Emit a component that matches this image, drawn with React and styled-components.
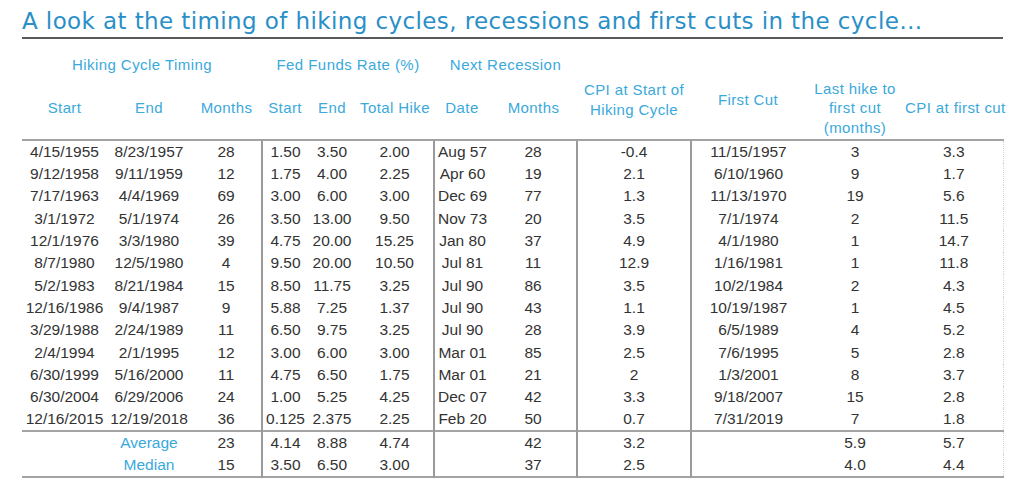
import React from "react";
import styled, { createGlobalStyle } from "styled-components";

const Global = createGlobalStyle`
  html, body { margin: 0; padding: 0; background: #fff; }
  body { font-family: "Liberation Sans", Arial, sans-serif; }
`;

const Page = styled.div`
  width: 1024px;
  height: 495px;
  padding: 0 21px 0 22px;
  box-sizing: border-box;
  overflow: hidden;
`;

const Title = styled.h1`
  margin: 0;
  padding-top: 6px;
  height: 31px;
  font-family: "DejaVu Sans", "Liberation Sans", sans-serif;
  font-size: 23px;
  letter-spacing: 0.4px;
  font-weight: 400;
  line-height: 30px;
  color: #2a8fc7;
  border-bottom: 2px solid #5a5a5a;
  white-space: nowrap;
`;

const Table = styled.table`
  width: 981px;
  border-collapse: collapse;
  table-layout: fixed;
  font-size: 15.5px;
  color: #333;
`;

const GroupRow = styled.tr`
  height: 38px;
`;

const HeadRow = styled.tr`
  height: 63px;
`;

const GroupCell = styled.th`
  padding: 0 0 4px;
  vertical-align: bottom;
  font-weight: 400;
  font-size: 15px;
  letter-spacing: 0.45px;
  color: #3aa9dc;
  text-align: center;
`;

const HeadCell = styled.th`
  padding: 0 0 ${(p) => (p.$lift ? "17px" : "0")};
  vertical-align: middle;
  font-weight: 400;
  font-size: 15px;
  letter-spacing: 0.4px;
  line-height: 19.5px;
  color: #3aa9dc;
  text-align: center;
  white-space: nowrap;
  border-bottom: 2px solid #a3a3a3;
`;

const Row = styled.tr`
  height: 22.3px;
  border-top: ${(p) => (p.$first ? "2px solid #a3a3a3" : "none")};
  border-bottom: ${(p) => (p.$last ? "2px solid #a3a3a3" : "none")};
`;

const Cell = styled.td`
  padding: 0;
  text-align: center;
  white-space: nowrap;
  line-height: 22px;
  color: ${(p) => (p.$label ? "#3aa9dc" : "#333")};
  border-left: ${(p) => (p.$divider ? "2px solid #9a9a9a" : "none")};
  border-right: ${(p) => (p.$edge ? "1px dotted #d4d4d4" : "none")};
`;

const widths = [85, 84, 71, 46, 48, 78, 56, 87, 114, 114, 100, 98];
const dividers = [3, 6, 8, 9];

const rows = [
  ["4/15/1955", "8/23/1957", "28", "1.50", "3.50", "2.00", "Aug 57", "28", "-0.4", "11/15/1957", "3", "3.3"],
  ["9/12/1958", "9/11/1959", "12", "1.75", "4.00", "2.25", "Apr 60", "19", "2.1", "6/10/1960", "9", "1.7"],
  ["7/17/1963", "4/4/1969", "69", "3.00", "6.00", "3.00", "Dec 69", "77", "1.3", "11/13/1970", "19", "5.6"],
  ["3/1/1972", "5/1/1974", "26", "3.50", "13.00", "9.50", "Nov 73", "20", "3.5", "7/1/1974", "2", "11.5"],
  ["12/1/1976", "3/3/1980", "39", "4.75", "20.00", "15.25", "Jan 80", "37", "4.9", "4/1/1980", "1", "14.7"],
  ["8/7/1980", "12/5/1980", "4", "9.50", "20.00", "10.50", "Jul 81", "11", "12.9", "1/16/1981", "1", "11.8"],
  ["5/2/1983", "8/21/1984", "15", "8.50", "11.75", "3.25", "Jul 90", "86", "3.5", "10/2/1984", "2", "4.3"],
  ["12/16/1986", "9/4/1987", "9", "5.88", "7.25", "1.37", "Jul 90", "43", "1.1", "10/19/1987", "1", "4.5"],
  ["3/29/1988", "2/24/1989", "11", "6.50", "9.75", "3.25", "Jul 90", "28", "3.9", "6/5/1989", "4", "5.2"],
  ["2/4/1994", "2/1/1995", "12", "3.00", "6.00", "3.00", "Mar 01", "85", "2.5", "7/6/1995", "5", "2.8"],
  ["6/30/1999", "5/16/2000", "11", "4.75", "6.50", "1.75", "Mar 01", "21", "2", "1/3/2001", "8", "3.7"],
  ["6/30/2004", "6/29/2006", "24", "1.00", "5.25", "4.25", "Dec 07", "42", "3.3", "9/18/2007", "15", "2.8"],
  ["12/16/2015", "12/19/2018", "36", "0.125", "2.375", "2.25", "Feb 20", "50", "0.7", "7/31/2019", "7", "1.8"],
];

const summary = [
  ["", "Average", "23", "4.14", "8.88", "4.74", "", "42", "3.2", "", "5.9", "5.7"],
  ["", "Median", "15", "3.50", "6.50", "3.00", "", "37", "2.5", "", "4.0", "4.4"],
];

const heads = [
  { t: ["Start"] },
  { t: ["End"] },
  { t: ["Months"] },
  { t: ["Start"] },
  { t: ["End"] },
  { t: ["Total Hike"] },
  { t: ["Date"] },
  { t: ["Months"] },
  { t: ["CPI at Start of", "Hiking Cycle"], lift: true },
  { t: ["First Cut"], lift: true },
  { t: ["Last hike to", "first cut", "(months)"] },
  { t: ["CPI at first cut"] },
];

const DataRow = ({ cells, first, last, summaryRow }) => (
  <Row $first={first} $last={last}>
    {cells.map((c, i) => (
      <Cell
        key={i}
        $divider={dividers.includes(i)}
        $edge={i === 11}
        $label={summaryRow && i === 1}
      >
        {c}
      </Cell>
    ))}
  </Row>
);

const App = () => (
  <Page>
    <Global />
    <Title>A look at the timing of hiking cycles, recessions and first cuts in the cycle…</Title>
    <Table>
      <colgroup>
        {widths.map((w, i) => (
          <col key={i} style={{ width: w }} />
        ))}
      </colgroup>
      <thead>
        <GroupRow>
          <GroupCell colSpan={3}>Hiking Cycle Timing</GroupCell>
          <GroupCell colSpan={3}>Fed Funds Rate (%)</GroupCell>
          <GroupCell colSpan={2}>Next Recession</GroupCell>
          <GroupCell colSpan={4} />
        </GroupRow>
        <HeadRow>
          {heads.map((h, i) => (
            <HeadCell key={i} $lift={h.lift}>
              {h.t.map((line, j) => (
                <React.Fragment key={j}>
                  {j > 0 && <br />}
                  {line}
                </React.Fragment>
              ))}
            </HeadCell>
          ))}
        </HeadRow>
      </thead>
      <tbody>
        {rows.map((r, i) => (
          <DataRow key={i} cells={r} />
        ))}
        {summary.map((r, i) => (
          <DataRow
            key={"s" + i}
            cells={r}
            summaryRow
            first={i === 0}
            last={i === summary.length - 1}
          />
        ))}
      </tbody>
    </Table>
  </Page>
);

export default App;
